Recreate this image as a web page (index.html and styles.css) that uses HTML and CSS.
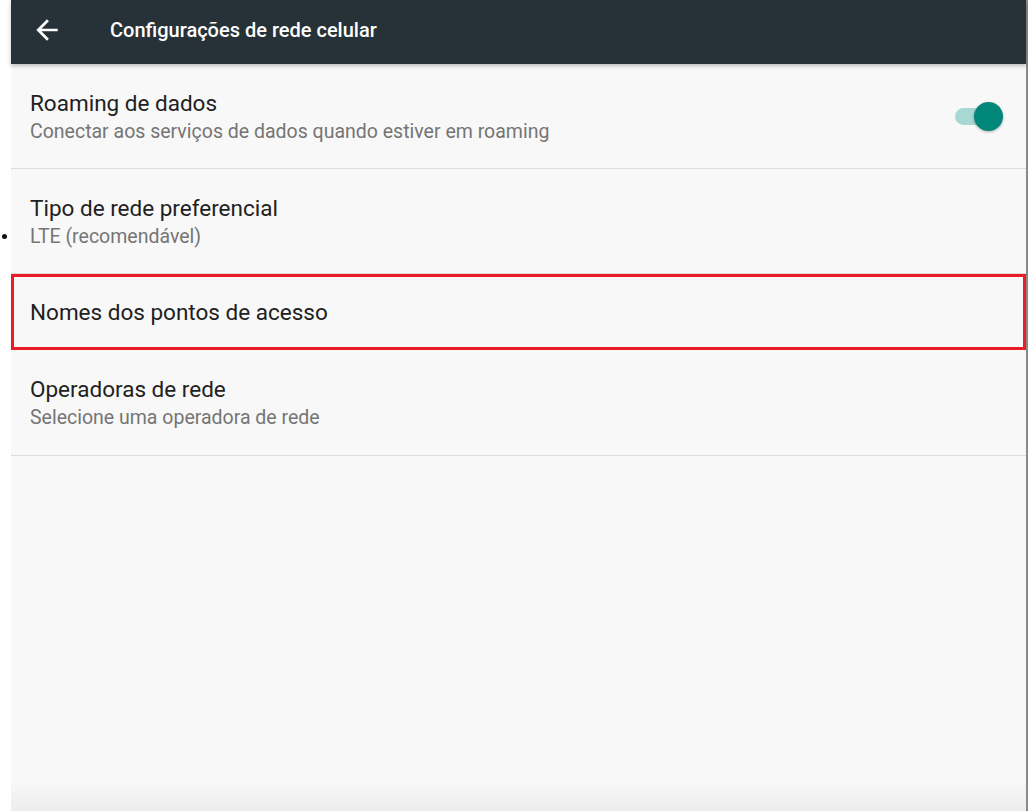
FILE: index.html
```html
<!DOCTYPE html>
<html lang="pt">
<head>
    <meta charset="UTF-8">
    <meta name="viewport" content="width=device-width, initial-scale=1.0">
    <title>Configurações de rede celular</title>
    <link rel="stylesheet" href="styles.css">
</head>
<body>
    <div class="page">
        <div class="gutter"><span class="dot"></span></div>

        <div class="screen">
            <header class="toolbar">
                <svg class="back" width="32" height="32" viewBox="0 0 24 24">
                    <path d="M20 11H7.83l5.59-5.59L12 4l-8 8 8 8 1.41-1.41L7.83 13H20v-2z" fill="#fff"/>
                </svg>
                <h1>Configurações de rede celular</h1>
            </header>

            <ul class="prefs">
                <li class="pref">
                    <div class="text">
                        <div class="title">Roaming de dados</div>
                        <div class="summary">Conectar aos serviços de dados quando estiver em roaming</div>
                    </div>
                    <div class="switch"><span class="track"></span><span class="thumb"></span></div>
                </li>
                <li class="pref">
                    <div class="text">
                        <div class="title">Tipo de rede preferencial</div>
                        <div class="summary">LTE (recomendável)</div>
                    </div>
                </li>
                <li class="pref marked">
                    <div class="text">
                        <div class="title">Nomes dos pontos de acesso</div>
                    </div>
                </li>
                <li class="pref last">
                    <div class="text">
                        <div class="title">Operadoras de rede</div>
                        <div class="summary">Selecione uma operadora de rede</div>
                    </div>
                </li>
            </ul>
        </div>
    </div>
</body>
</html>
```

FILE: styles.css
```css
body {
    margin: 0;
    background-color: #fff;
    font-family: Roboto, "Noto Sans", Arial, sans-serif;
}
.page {
    display: flex;
    height: 811px;
    overflow: hidden;
}
.gutter {
    width: 11px;
    flex-shrink: 0;
}
.dot {
    display: block;
    width: 5px;
    height: 5px;
    margin: 234px 0 0 2px;
    border-radius: 50%;
    background-color: #111;
}
.screen {
    width: 1015px;
    display: flex;
    flex-direction: column;
    background: linear-gradient(to bottom, #f8f8f8 0, #f8f8f8 780px, #ededed 811px);
    border-right: 2px solid #8a8a8a;
}
.toolbar {
    height: 64px;
    box-sizing: border-box;
    padding-bottom: 4px;
    display: flex;
    align-items: center;
    background-color: #263238;
    box-shadow: 0 2px 4px rgba(0, 0, 0, 0.25);
    position: relative;
    z-index: 1;
}
.back {
    margin-left: 20px;
}
.toolbar h1 {
    margin: 0 0 0 47px;
    font-size: 20px;
    font-weight: 500;
    color: #fff;
}
.prefs {
    list-style: none;
    margin: 0;
    padding: 0;
}
.pref {
    height: 104px;
    display: flex;
    align-items: center;
    padding: 0 19px;
    border-bottom: 1px solid #dcdcdc;
}
.pref.marked {
    height: 70px;
    border: 3px solid #ed1c24;
    padding-left: 16px;
}
.pref.last {
    height: 105px;
}
.title {
    font-size: 22.5px;
    color: #212121;
}
.summary {
    margin-top: 4px;
    font-size: 19.5px;
    color: #757575;
}
.text {
    flex: 1;
}
.switch {
    position: relative;
    width: 50px;
    height: 30px;
    margin-right: 4px;
}
.track {
    position: absolute;
    left: 2px;
    top: 7px;
    width: 36px;
    height: 17px;
    border-radius: 9px;
    background-color: #a7d8d3;
}
.thumb {
    position: absolute;
    left: 21px;
    top: 1px;
    width: 29px;
    height: 29px;
    border-radius: 50%;
    background-color: #00877a;
    box-shadow: 0 1px 3px rgba(0, 0, 0, 0.3);
}
```
